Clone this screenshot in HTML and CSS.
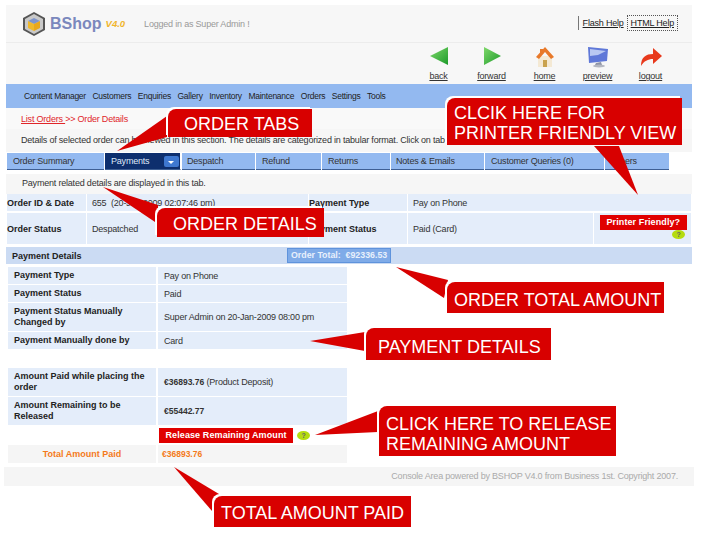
FILE: index.html
```html
<!DOCTYPE html>
<html lang="en">
<head>
    <meta charset="UTF-8">
    <meta name="viewport" content="width=device-width, initial-scale=1.0">
    <title>BShop - Order Details</title>
    <link rel="stylesheet" href="styles.css">
</head>
<body>
    <div class="page">
        <div class="top-bar">
            <svg class="logo-mark" width="24" height="26" viewBox="0 0 24 26">
                <polygon points="12,1 23,7 23,19 12,25 1,19 1,7" fill="#555"/>
                <polygon points="12,3 21,8 21,18 12,23 3,18 3,8" fill="#c9c9c9"/>
                <polygon points="12,7 18,10 12,13 6,10" fill="#7f95cc"/>
                <polygon points="6,10 12,13 12,20 6,17" fill="#f0b92c"/>
                <polygon points="18,10 12,13 12,20 18,17" fill="#e9a81c"/>
            </svg>
            <span class="brand">BShop</span>
            <span class="version">V4.0</span>
            <span class="logged">Logged in as Super Admin !</span>
            <div class="help-links">
                <a href="#" class="help-flash">Flash Help</a>
                <a href="#" class="help-html">HTML Help</a>
            </div>
        </div>

        <div class="toolbar">
            <a href="#" class="tool">
                <svg width="24" height="22" viewBox="0 0 24 22"><defs><linearGradient id="greenL" x1="0" y1="0" x2="1" y2="1"><stop offset="0" stop-color="#7fd86a"/><stop offset="1" stop-color="#1c9a2a"/></linearGradient></defs><polygon points="3,10 21,1 21,19" fill="url(#greenL)"/></svg>
                <span>back</span>
            </a>
            <a href="#" class="tool">
                <svg width="24" height="22" viewBox="0 0 24 22"><polygon points="21,10 4,1 4,19" fill="url(#greenL)"/></svg>
                <span>forward</span>
            </a>
            <a href="#" class="tool">
                <svg width="24" height="22" viewBox="0 0 24 22"><polygon points="5,10 19,10 19,21 5,21" fill="#f4e9d4"/><polygon points="12,1 21,11 18,13 12,6 6,13 3,11" fill="#e8792a"/><polygon points="7,3 10,3 10,6 7,8" fill="#e8792a"/><rect x="10" y="14" width="4" height="7" fill="#c9a24e"/></svg>
                <span>home</span>
            </a>
            <a href="#" class="tool">
                <svg width="24" height="22" viewBox="0 0 24 22"><polygon points="2,1 22,3 21,15 3,17" fill="#5f78d8"/><polygon points="4,3 20,5 12,9 4,10" fill="#b9c8f2"/><polygon points="10,17 15,16 16,19 9,19" fill="#8d93a6"/><ellipse cx="13" cy="20" rx="6" ry="1.5" fill="#b4b7c0"/></svg>
                <span>preview</span>
            </a>
            <a href="#" class="tool">
                <svg width="24" height="22" viewBox="0 0 24 22"><path d="M2 20 C2 11 7 8 14 8 L14 2 L23 10 L14 18 L14 13 C9 13 5 15 2 20 Z" fill="#e8391c"/></svg>
                <span>logout</span>
            </a>
        </div>

        <ul class="main-nav">
            <li>Content Manager</li>
            <li>Customers</li>
            <li>Enquiries</li>
            <li>Gallery</li>
            <li>Inventory</li>
            <li>Maintenance</li>
            <li>Orders</li>
            <li>Settings</li>
            <li>Tools</li>
        </ul>

        <div class="breadcrumb"><a href="#">List Orders </a>&gt;&gt; Order Details</div>
        <div class="section-intro">Details of selected order can be viewed in this section. The details are categorized in tabular format. Click on tabs to view.</div>

        <div class="tabs">
            <div class="tab tab-summary">Order Summary</div>
            <div class="tab tab-payments active">Payments<span class="tab-arrow"></span></div>
            <div class="tab tab-despatch">Despatch</div>
            <div class="tab tab-refund">Refund</div>
            <div class="tab tab-returns">Returns</div>
            <div class="tab tab-notes">Notes &amp; Emails</div>
            <div class="tab tab-queries">Customer Queries (0)</div>
            <div class="tab tab-others">Others</div>
        </div>

        <div class="tab-note">Payment related details are displayed in this tab.</div>

        <table class="order-table">
            <colgroup>
                <col class="col-a"><col class="col-b"><col class="col-c"><col class="col-d"><col class="col-e">
            </colgroup>
            <tr class="row-short">
                <th>Order ID &amp; Date</th>
                <td>655 &nbsp;(20-Jan-2009 02:07:46 pm)</td>
                <th>Payment Type</th>
                <td colspan="2">Pay on Phone</td>
            </tr>
            <tr class="row-tall">
                <th>Order Status</th>
                <td>Despatched</td>
                <th>Payment Status</th>
                <td>Paid (Card)</td>
                <td class="print-cell">
                    <span class="btn-red">Printer Friendly?</span>
                    <span class="hint hint-right">?</span>
                </td>
            </tr>
        </table>

        <div class="details-bar">
            <strong class="details-title">Payment Details</strong>
            <span class="order-total">Order Total: &nbsp;€92336.53</span>
        </div>

        <table class="pay-table">
            <tr class="row-single"><th>Payment Type</th><td>Pay on Phone</td></tr>
            <tr class="row-single"><th>Payment Status</th><td>Paid</td></tr>
            <tr class="row-double"><th>Payment Status Manually Changed by</th><td>Super Admin on 20-Jan-2009 08:00 pm</td></tr>
            <tr class="row-single"><th>Payment Manually done by</th><td>Card</td></tr>
        </table>

        <table class="pay-table amounts">
            <tr class="row-double"><th>Amount Paid while placing the order</th><td><b>€36893.76</b> (Product Deposit)</td></tr>
            <tr class="row-double"><th>Amount Remaining to be Released</th><td><b>€55442.77</b></td></tr>
            <tr class="row-button"><th></th><td><span class="btn-red btn-release">Release Remaining Amount</span><span class="hint">?</span></td></tr>
            <tr class="row-total"><th>Total Amount Paid</th><td>€36893.76</td></tr>
        </table>

        <div class="footer">Console Area powered by BSHOP V4.0 from Business 1st. Copyright 2007.</div>
    </div>

    <!-- red annotation callouts sit over the page -->
    <svg class="pointers" width="702" height="549" viewBox="0 0 702 549">
        <g fill="#d80000">
            <polygon points="117,151 167,116 167,137"/>
            <polygon points="638,195 594,146 619,146"/>
            <polygon points="103,187 158,205 158,224"/>
            <polygon points="396,267 448,280 444,298"/>
            <polygon points="310,341 365,332 365,351"/>
            <polygon points="315,435 378,411 378,432"/>
            <polygon points="174,467 219,494 212,511"/>
        </g>
    </svg>
    <div class="callout c-tabs">ORDER TABS</div>
    <div class="callout c-printer">CLCIK HERE FOR<br>PRINTER FRIENDLY VIEW</div>
    <div class="callout c-details">ORDER DETAILS</div>
    <div class="callout c-total">ORDER TOTAL AMOUNT</div>
    <div class="callout c-payment">PAYMENT DETAILS</div>
    <div class="callout c-release">CLICK HERE TO RELEASE<br>REMAINING AMOUNT</div>
    <div class="callout c-paid">TOTAL AMOUNT PAID</div>
</body>
</html>
```

FILE: styles.css
```css
body {
    font-family: "Liberation Sans", Arial, sans-serif;
    font-size: 9px;
    letter-spacing: -0.2px;
    color: #333;
    background-color: #fff;
    margin: 0;
    padding: 0;
}

a {
    color: inherit;
}

.page {
    width: 686px;
    margin: 5px 0 0 6px;
}

.top-bar {
    display: flex;
    align-items: center;
    height: 37px;
    padding-left: 16px;
    background-color: #f7f7f7;
    border-bottom: 1px solid #ececec;
}

.logo-mark {
    margin-right: 4px;
}

.brand {
    font-size: 16px;
    font-weight: bold;
    letter-spacing: 0;
    color: #7b88bd;
}

.version {
    margin-left: 4px;
    font-size: 9.5px;
    font-weight: bold;
    font-style: italic;
    letter-spacing: 0;
    color: #f0b52c;
}

.logged {
    margin-left: 19px;
    color: #999;
}

.help-links {
    display: flex;
    align-items: center;
    margin-left: auto;
    margin-right: 14px;
    padding-bottom: 1px;
    color: #222;
}

.help-flash {
    padding: 2px 0 2px 4px;
    border-left: 1px solid #777;
}

.help-html {
    margin-left: 3px;
    padding: 2px 3px;
    border: 1px dotted #555;
}

.toolbar {
    display: flex;
    justify-content: flex-end;
    height: 41px;
    padding-right: 15px;
    background-color: #f7f7f7;
}

.tool {
    display: flex;
    flex-direction: column;
    align-items: center;
    width: 53px;
    padding-top: 3px;
    color: #333;
}

.tool span {
    margin-top: 3px;
}

.main-nav {
    display: flex;
    gap: 6.5px;
    align-items: center;
    height: 24px;
    margin: 0;
    padding: 0 0 0 18px;
    list-style: none;
    font-size: 8.5px;
    letter-spacing: -0.25px;
    background-color: #93b9f0;
    color: #222;
}

.breadcrumb {
    height: 21px;
    padding-left: 15px;
    line-height: 22px;
    color: #e0262a;
    background-color: #f9f9f9;
}

.section-intro {
    height: 23px;
    padding-left: 15px;
    line-height: 23px;
    white-space: nowrap;
    background-color: #f6f6f6;
}

.tabs {
    display: flex;
    gap: 1px;
    height: 17px;
    margin: 1px 0 0 1px;
}

.tab {
    box-sizing: border-box;
    padding-left: 6px;
    line-height: 16px;
    background-color: #93b9f0;
    border-bottom: 1px solid #3e5f94;
}

.tab-summary { width: 97px; }
.tab-payments { width: 76px; }
.tab-despatch { width: 73px; padding-left: 5px; }
.tab-refund { width: 65px; }
.tab-returns { width: 68px; }
.tab-notes { width: 93px; padding-left: 5px; }
.tab-queries { width: 119px; }
.tab-others { width: 64px; }

.tab.active {
    position: relative;
    background-color: #0e2f6e;
    color: #dfe8f8;
    border-right: 1px solid #fff;
}

.tab-arrow {
    position: absolute;
    right: 1px;
    top: 3px;
    width: 15px;
    height: 11px;
    border-radius: 2px;
    background-color: #3f78d0;
}

.tab-arrow::after {
    content: "";
    position: absolute;
    left: 4px;
    top: 5px;
    border: 3.5px solid transparent;
    border-top-color: #fff;
    border-bottom: 0;
}

.tab-note {
    height: 20px;
    margin-top: 4px;
    padding-left: 16px;
    line-height: 19px;
    background-color: #f6f6f6;
}

table {
    border-collapse: separate;
    border-spacing: 2px;
}

th {
    text-align: left;
    font-size: 9px;
    letter-spacing: 0;
    color: #222;
}

.order-table {
    width: 686px;
    margin: -2px 0 0 0;
    table-layout: fixed;
    border-spacing: 1px 2px;
}

.order-table th,
.order-table td {
    padding: 0;
    background-color: #e4edfa;
}

.order-table td {
    padding-left: 5px;
}

.col-a { width: 79px; }
.col-b { width: 221px; }
.col-c { width: 98px; }
.col-d { width: 185px; }
.col-e { width: 97px; }

.row-short { height: 17px; }
.row-tall { height: 31px; }

.order-table .print-cell {
    padding-left: 6px;
    vertical-align: top;
    line-height: 0;
}

.btn-red {
    display: inline-block;
    padding: 0 6.5px;
    line-height: 15px;
    font-size: 9px;
    font-weight: bold;
    letter-spacing: 0.1px;
    color: #fff;
    background-color: #e00000;
}

.order-table .btn-red {
    margin-top: 2px;
}

.hint {
    display: inline-block;
    width: 13px;
    height: 9px;
    margin-left: 4px;
    border-radius: 50%;
    font-size: 7px;
    font-weight: bold;
    line-height: 9px;
    text-align: center;
    color: #666;
    background-color: #b5dc10;
}

.hint-right {
    display: block;
    margin: 0 0 0 72px;
}

.details-bar {
    display: flex;
    align-items: center;
    height: 17px;
    margin-top: 1px;
    padding-left: 6px;
    background-color: #cbdbf3;
    font-size: 9px;
    letter-spacing: 0;
    color: #222;
}

.details-title {
    width: 275px;
}

.order-total {
    padding: 0 3px;
    line-height: 13px;
    font-size: 8.8px;
    font-weight: bold;
    color: #e8f0fc;
    background-color: #7fabe8;
    border: 1px solid #5f93dc;
}

.pay-table {
    width: 343px;
    margin: 2px 0 0 0;
    table-layout: fixed;
    border-spacing: 2px 1px;
}

.pay-table th {
    width: 142px;
    padding: 0 0 0 6px;
    line-height: 11px;
    background-color: #e4edfa;
}

.pay-table td {
    padding: 0 0 0 6px;
    background-color: #e4edfa;
}

.amounts {
    margin-top: 17px;
}

.amounts b {
    font-size: 8.5px;
    letter-spacing: 0;
}

.row-single { height: 17px; }
.row-double { height: 28px; }
.row-button { height: 18px; }
.row-total { height: 18px; }

.pay-table .row-button th,
.pay-table .row-button td {
    padding: 0 0 0 1px;
    background: none;
}

.pay-table .row-total th,
.pay-table .row-total td {
    background-color: #f5f5f5;
    font-weight: bold;
    letter-spacing: 0;
    color: #f47a1a;
}

.pay-table .row-total th {
    padding-left: 0;
    text-align: center;
}

.pay-table .row-total td {
    padding-left: 4px;
    font-size: 8.5px;
}

.footer {
    height: 19px;
    margin: 3px -2px 0 -2px;
    padding-right: 16px;
    line-height: 19px;
    text-align: right;
    color: #aaa;
    background-color: #f5f5f5;
}

.pointers {
    position: absolute;
    left: 0;
    top: 0;
}

.callout {
    position: absolute;
    box-sizing: border-box;
    padding-left: 7px;
    font-size: 18px;
    line-height: 20px;
    letter-spacing: 0;
    color: #fff;
    white-space: nowrap;
    background-color: #d80000;
    border-radius: 8px 0 0 0;
    box-shadow: -2px -2px 0 #fff;
}

.c-tabs { left: 168px; top: 109px; width: 144px; height: 28px; padding: 5px 0 0 16px; }
.c-printer { left: 447px; top: 98px; width: 235px; height: 47px; padding-top: 5px; }
.c-details { left: 157px; top: 208px; width: 167px; height: 29px; padding: 6px 0 0 16px; }
.c-total { left: 447px; top: 282px; width: 217px; height: 31px; padding-top: 8px; }
.c-payment { left: 366px; top: 328px; width: 185px; height: 32px; padding: 9px 0 0 12px; }
.c-release { left: 379px; top: 406px; width: 237px; height: 50px; padding-top: 8px; }
.c-paid { left: 214px; top: 496px; width: 197px; height: 31px; padding-top: 7px; }
```
